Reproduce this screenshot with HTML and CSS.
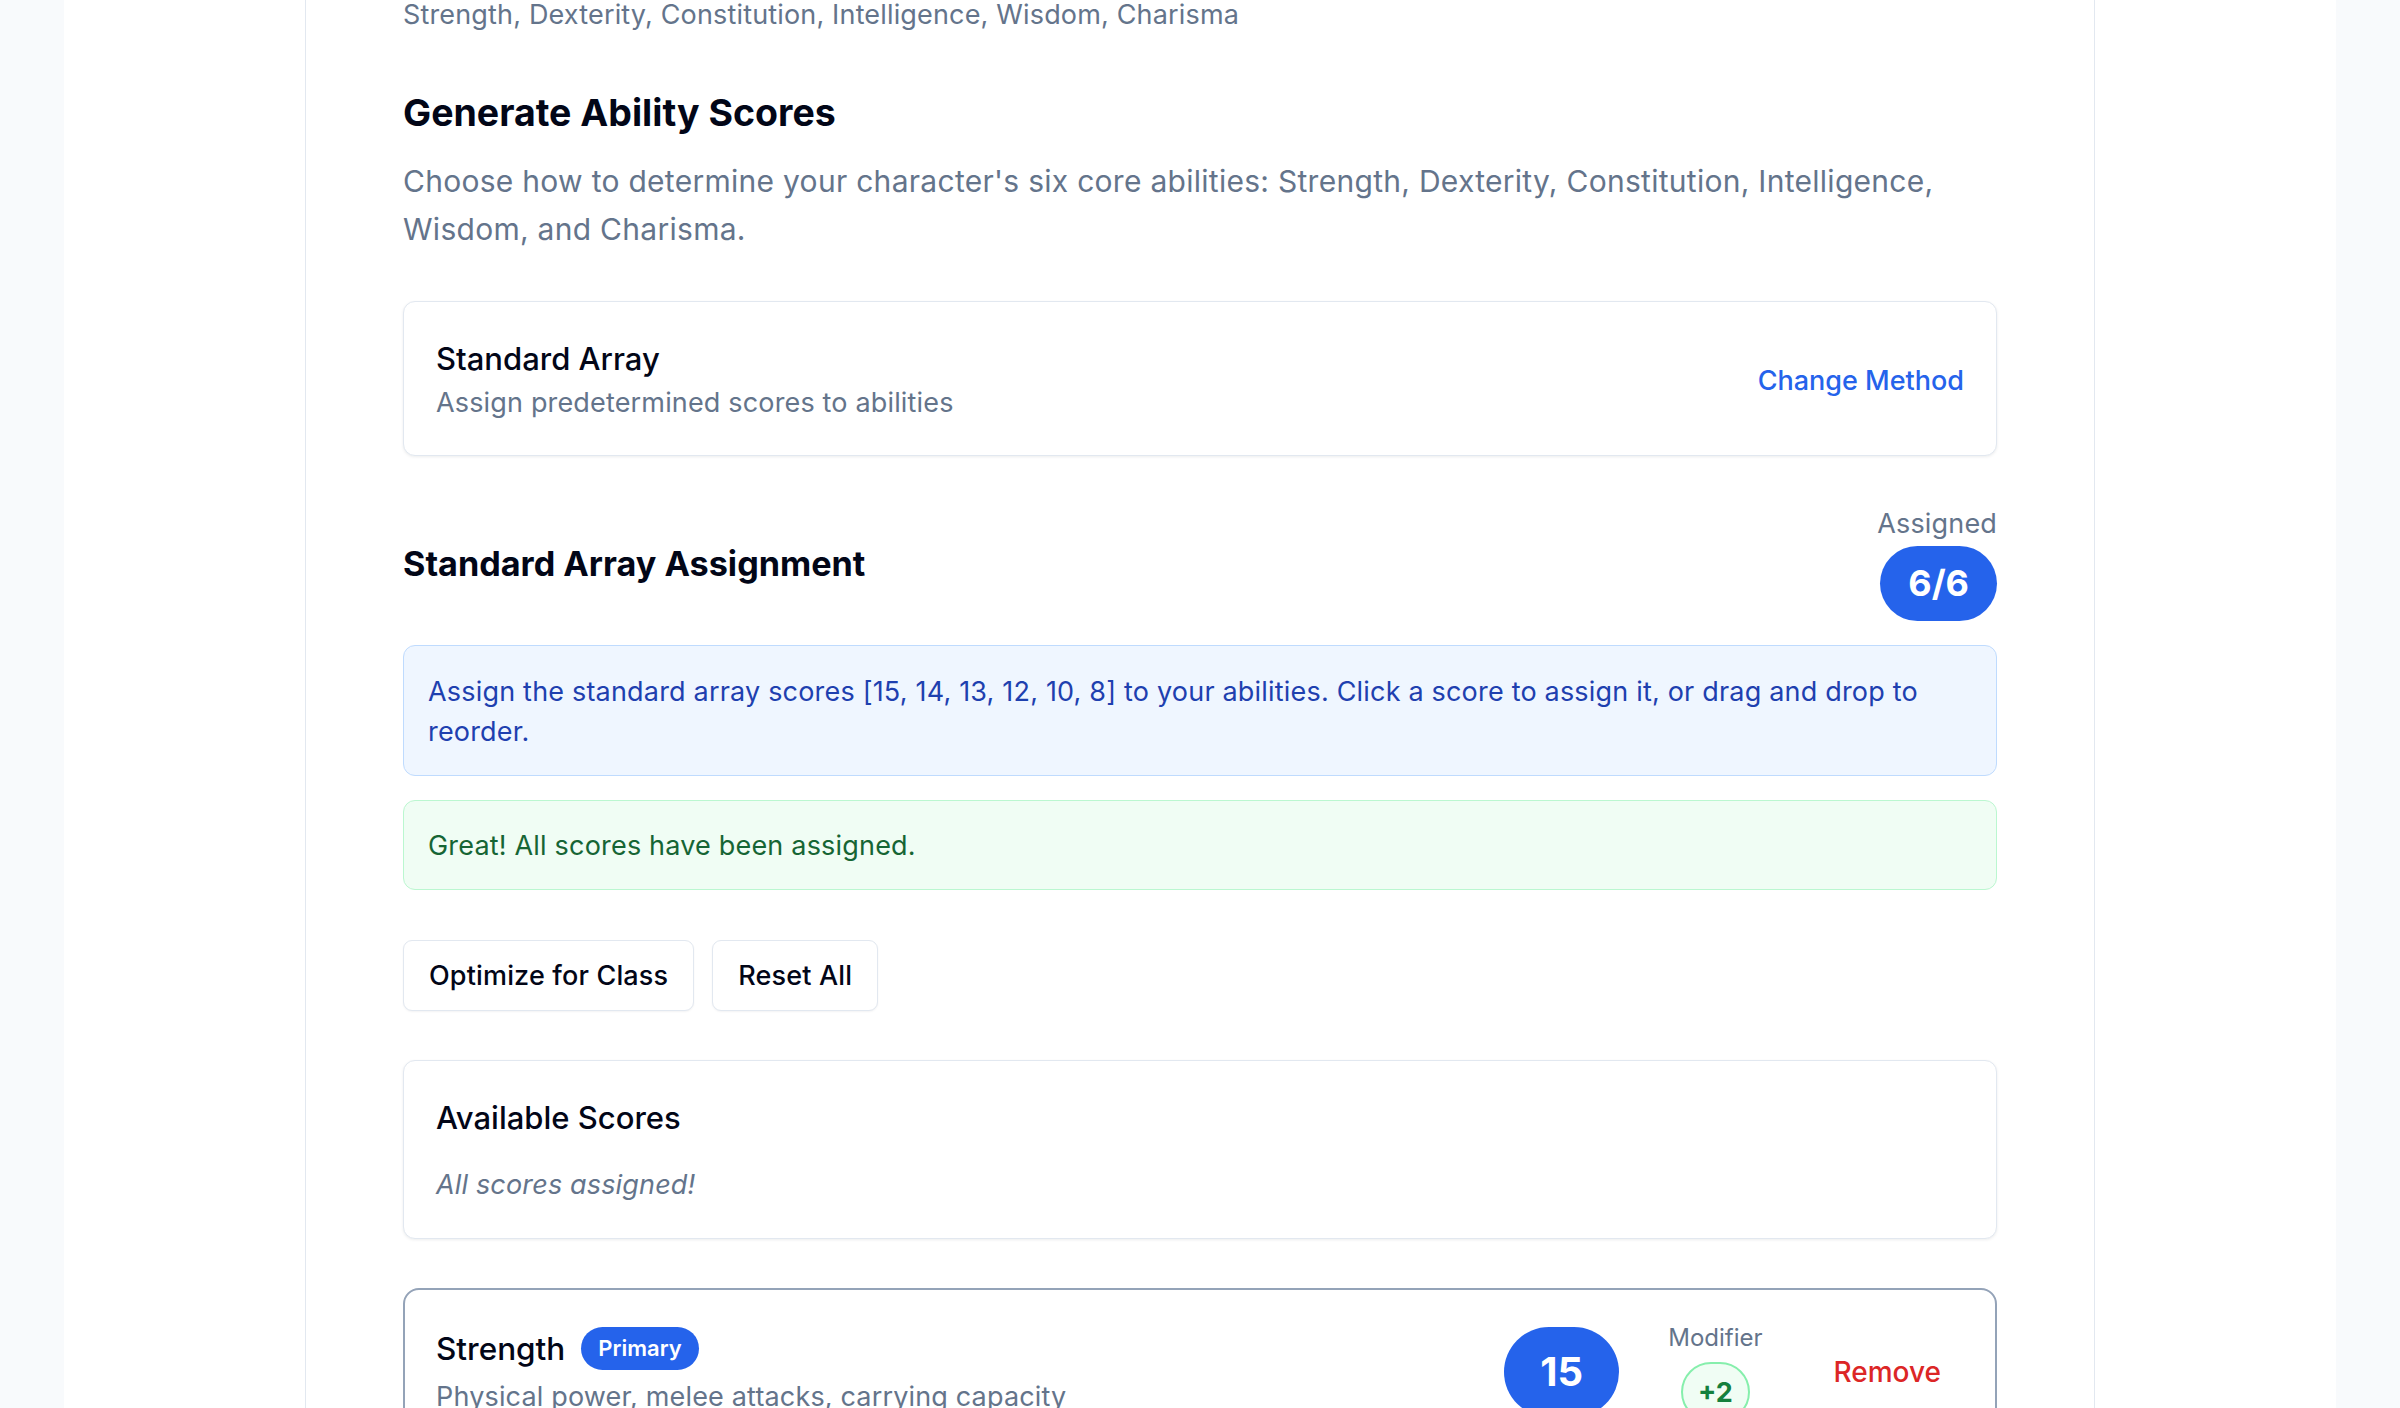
FILE: index.html
```html
<!DOCTYPE html>
<html lang="en">
<head>
<meta charset="utf-8">
<title>Generate Ability Scores</title>
<link rel="stylesheet" href="styles.css">
</head>
<body>
<div class="page">
  <main class="panel">
    <p class="traits">Strength, Dexterity, Constitution, Intelligence, Wisdom, Charisma</p>

    <h2 class="section-title">Generate Ability Scores</h2>
    <p class="lead">Choose how to determine your character's six core abilities: Strength, Dexterity, Constitution, Intelligence, Wisdom, and Charisma.</p>

    <div class="card method-card">
      <div class="method-info">
        <div class="card-title">Standard Array</div>
        <div class="card-sub">Assign predetermined scores to abilities</div>
      </div>
      <button class="link-btn">Change Method</button>
    </div>

    <div class="assign-header">
      <h3 class="sub-title">Standard Array Assignment</h3>
      <div class="assigned">
        <span class="assigned-label">Assigned</span>
        <span class="assigned-pill">6/6</span>
      </div>
    </div>

    <div class="notice notice-info">Assign the standard array scores [15, 14, 13, 12, 10, 8] to your abilities. Click a score to assign it, or drag and drop to reorder.</div>

    <div class="notice notice-success">Great! All scores have been assigned.</div>

    <div class="actions">
      <button class="btn">Optimize for Class</button>
      <button class="btn">Reset All</button>
    </div>

    <div class="card available">
      <div class="card-title">Available Scores</div>
      <div class="empty">All scores assigned!</div>
    </div>

    <div class="ability-card">
      <div class="ability-info">
        <div class="ability-head">
          <span class="ability-name">Strength</span>
          <span class="badge-primary">Primary</span>
        </div>
        <div class="ability-desc">Physical power, melee attacks, carrying capacity</div>
      </div>
      <div class="ability-right">
        <div class="score-pill">15</div>
        <div class="modifier">
          <span class="modifier-label">Modifier</span>
          <span class="modifier-badge">+2</span>
        </div>
        <button class="remove-btn">Remove</button>
      </div>
    </div>
  </main>
</div>
</body>
</html>
```

FILE: styles.css
```css
* { box-sizing: border-box; }

html, body {
  margin: 0;
  padding: 0;
}

body {
  background: #f8fafc;
  font-family: Inter, "Noto Sans", "Liberation Sans", sans-serif;
  color: #0f172a;
}

.page {
  width: 2272px;
  margin: 0 auto;
  background: #ffffff;
  min-height: 100vh;
  display: flex;
  justify-content: center;
}

.panel {
  width: 1790px;
  border-left: 1px solid #e2e8f0;
  border-right: 1px solid #e2e8f0;
  padding: 0 97px 60px;
}

p { margin: 0; }

.traits {
  margin-top: -5px;
  font-size: 27px;
  line-height: 40px;
  letter-spacing: 0.16px;
  color: #64748b;
}

.section-title {
  margin: 54px 0 0;
  font-size: 37.5px;
  line-height: 48px;
  font-weight: 700;
  color: #020617;
}

.lead {
  margin-top: 20px;
  font-size: 30px;
  line-height: 48px;
  letter-spacing: 0.28px;
  color: #64748b;
}

.card {
  background: #fff;
  border: 1px solid #e2e8f0;
  border-radius: 12px;
  box-shadow: 0 1px 3px rgba(15, 23, 42, 0.08);
}

.method-card {
  margin-top: 48px;
  padding: 36px 32px 32px;
  display: flex;
  justify-content: space-between;
  align-items: center;
}

.card-title {
  font-size: 31px;
  line-height: 42px;
  font-weight: 500;
  color: #020617;
}

.card-sub {
  margin-top: 3px;
  font-size: 27px;
  line-height: 40px;
  letter-spacing: 0.16px;
  color: #64748b;
}

.link-btn {
  background: none;
  border: none;
  padding: 0;
  font-family: inherit;
  font-size: 27px;
  line-height: 40px;
  font-weight: 500;
  color: #2563eb;
  cursor: pointer;
}

.assign-header {
  margin-top: 50px;
  display: flex;
  justify-content: space-between;
  align-items: center;
}

.sub-title {
  margin: 0;
  font-size: 34.2px;
  line-height: 46px;
  font-weight: 700;
  color: #020617;
}

.assigned {
  display: flex;
  flex-direction: column;
  align-items: flex-end;
}

.assigned-label {
  font-size: 27px;
  line-height: 36px;
  letter-spacing: 0.16px;
  color: #64748b;
}

.assigned-pill {
  margin-top: 4px;
  background: #2563eb;
  color: #fff;
  font-size: 36px;
  line-height: 49px;
  font-weight: 700;
  padding: 13px 28px;
  border-radius: 9999px;
}

.notice {
  border-radius: 12px;
  border: 1px solid;
  font-size: 27px;
  line-height: 40px;
  letter-spacing: 0.19px;
  padding: 26px 24px 23px;
}

.notice-info {
  margin-top: 24px;
  background: #eff6ff;
  border-color: #bfdbfe;
  color: #1e40af;
}

.notice-success {
  margin-top: 24px;
  padding-top: 25px;
  background: #f0fdf4;
  border-color: #bbf7d0;
  color: #166534;
}

.actions {
  margin-top: 50px;
  display: flex;
  gap: 18px;
}

.btn {
  background: #fff;
  border: 1px solid #e2e8f0;
  border-radius: 9px;
  padding: 15px 25px;
  font-family: inherit;
  font-size: 27px;
  line-height: 39px;
  font-weight: 500;
  letter-spacing: 0.16px;
  color: #020617;
  box-shadow: 0 1px 2px rgba(15, 23, 42, 0.05);
  cursor: pointer;
}

.available {
  margin-top: 49px;
  padding: 36px 32px 33px;
}

.empty {
  margin-top: 26px;
  font-size: 27px;
  line-height: 40px;
  letter-spacing: 0.16px;
  font-style: italic;
  color: #64748b;
}

.ability-card {
  margin-top: 49px;
  border: 2px solid #94a3b8;
  border-radius: 16px;
  padding: 31px 31px;
  display: flex;
  justify-content: space-between;
  align-items: center;
}

.ability-head {
  display: flex;
  align-items: center;
  gap: 16px;
}

.ability-name {
  font-size: 31.5px;
  line-height: 43px;
  font-weight: 500;
  color: #020617;
}

.badge-primary {
  background: #2563eb;
  color: #fff;
  font-size: 22px;
  line-height: 43px;
  font-weight: 600;
  padding: 0 17px;
  border-radius: 9999px;
}

.ability-desc {
  margin-top: 7px;
  font-size: 27px;
  line-height: 40px;
  letter-spacing: 0.16px;
  color: #64748b;
}

.ability-right {
  display: flex;
  align-items: center;
  gap: 49px;
}

.score-pill {
  width: 115px;
  height: 90px;
  border-radius: 9999px;
  background: #2563eb;
  color: #fff;
  font-size: 40px;
  font-weight: 700;
  display: flex;
  align-items: center;
  justify-content: center;
}

.modifier {
  display: flex;
  flex-direction: column;
  align-items: center;
}

.modifier-label {
  font-size: 24px;
  line-height: 33px;
  color: #64748b;
}

.modifier-badge {
  margin-top: 8px;
  width: 69px;
  height: 60px;
  border-radius: 9999px;
  border: 2px solid #86efac;
  background: #f0fdf4;
  color: #15803d;
  font-size: 27px;
  font-weight: 700;
  display: flex;
  align-items: center;
  justify-content: center;
}

.remove-btn {
  background: none;
  border: none;
  padding: 0 23px 0 22px;
  font-family: inherit;
  font-size: 28px;
  line-height: 40px;
  font-weight: 500;
  color: #dc2626;
  cursor: pointer;
}
```
